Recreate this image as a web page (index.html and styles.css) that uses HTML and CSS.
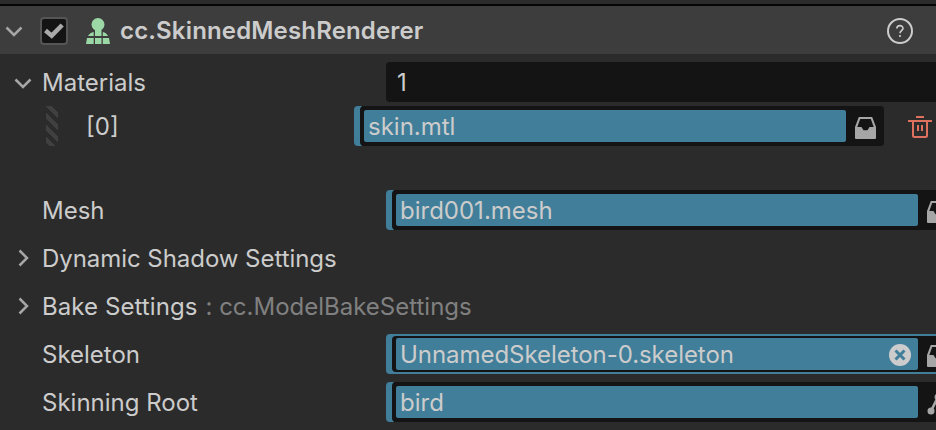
FILE: index.html
```html
<!DOCTYPE html>
<html lang="en">
<head>
<meta charset="utf-8">
<title>cc.SkinnedMeshRenderer</title>
<link rel="stylesheet" href="styles.css">
</head>
<body>
<svg class="defs" width="0" height="0">
  <symbol id="down" viewBox="0 0 18 12"><path d="M1.500 1.500 9 9l7.500-7.500" fill="none" stroke="#a6a6a6" stroke-width="2.500"/></symbol>
  <symbol id="right" viewBox="0 0 12 18"><path d="M1.500 1.500 9 9l-7.500 7.500" fill="none" stroke="#a6a6a6" stroke-width="2.500"/></symbol>
  <symbol id="tray" viewBox="0 0 22 22"><path fill="#a6a6a6" fill-rule="evenodd" d="M3.800 0h13.400L21 10v11q0 1-1 1H1q-1 0-1-1V10zM5.200 2 2.300 10H6.500l2 3.200h4l2-3.200h4.200L15.800 2z"/></symbol>
</svg>
<main class="panel">
  <header class="header">
    <svg class="chevron-down" width="18" height="12"><use href="#down"/></svg>
    <span class="checkbox"><svg width="20" height="16" viewBox="0 0 20 16"><path d="M1.500 7.500 7.700 12.700 18.200 2" fill="none" stroke="#a9a9a9" stroke-width="4.500"/></svg></span>
    <svg class="component" width="24" height="26" viewBox="0 0 24 26">
      <g fill="#9bd8a5"><circle cx="12" cy="6.500" r="6.500"/><path d="M9 12h6.500v6H9zM7.700 14V18H2q2-3.500 5.700-4zM16.800 14V18H22q-1.800-3.500-5.200-4zM1 20H7.700v6H0zM9 20h6.500v6H9zM16.800 20H23l1 6h-7.200z"/></g>
    </svg>
    <h1 class="title">cc.SkinnedMeshRenderer</h1>
    <svg class="help" width="26" height="26" viewBox="0 0 26 26"><circle cx="13" cy="13" r="12" fill="none" stroke="#ccc" stroke-width="2"/><path d="M9.800 10.600C9.900 6.700 16 6.700 16 10.300c0 2.200-3 2.600-3 5" fill="none" stroke="#ccc" stroke-width="1.600"/><circle cx="13" cy="18" r="1.100" fill="#ccc"/></svg>
  </header>
  <section class="props">
    <div class="row">
      <span class="toggle"><svg class="chevron-down" width="18" height="12"><use href="#down"/></svg></span>
      <span class="label">Materials</span>
      <span class="number">1</span>
    </div>
    <div class="row item">
      <span class="grip"></span>
      <span class="label index">[0]</span>
      <span class="asset asset-item"><span class="value">skin.mtl</span><svg class="pick" width="22" height="22"><use href="#tray"/></svg></span>
      <svg class="trash" width="24" height="22" viewBox="0 0 24 22"><path d="M8 1h8M0 5h24M5 5v14.500q0 1.500 1.500 1.500h11q1.500 0 1.500-1.500V5M10 9v6M14 9v6" fill="none" stroke="#e0715f" stroke-width="2"/></svg>
    </div>
    <div class="row mesh">
      <span class="toggle"></span>
      <span class="label">Mesh</span>
      <span class="asset"><span class="value">bird001.mesh</span><svg class="pick" width="22" height="22"><use href="#tray"/></svg></span>
    </div>
    <div class="row">
      <span class="toggle"><svg class="chevron-right" width="12" height="18"><use href="#right"/></svg></span>
      <span class="label tight">Dynamic Shadow Settings</span>
    </div>
    <div class="row">
      <span class="toggle"><svg class="chevron-right" width="12" height="18"><use href="#right"/></svg></span>
      <span class="label bake"><span class="name">Bake Settings</span><span class="type">: cc.ModelBakeSettings</span></span>
    </div>
    <div class="row">
      <span class="toggle"></span>
      <span class="label">Skeleton</span>
      <span class="asset hovered"><span class="value tight">UnnamedSkeleton-0.skeleton<svg class="clear" width="22" height="22" viewBox="0 0 22 22"><circle cx="11" cy="11" r="11" fill="#ccc"/><path d="m6.500 6.500 9 9m0-9-9 9" stroke="#417e99" stroke-width="3"/></svg></span><svg class="pick" width="22" height="22"><use href="#tray"/></svg></span>
    </div>
    <div class="row">
      <span class="toggle"></span>
      <span class="label">Skinning Root</span>
      <span class="asset"><span class="value">bird</span><svg class="pick" width="22" height="22" viewBox="0 0 22 22"><path d="m4 18 7-14 7 14" fill="none" stroke="#a6a6a6" stroke-width="2.600"/><g fill="#a6a6a6"><circle cx="4" cy="18" r="3.500"/><circle cx="11" cy="4" r="3.500"/><circle cx="18" cy="18" r="3.500"/></g></svg></span>
    </div>
  </section>
</main>
</body>
</html>
```
FILE: styles.css
```css
* { box-sizing: border-box; }
body {
  margin: 0;
  height: 430px;
  overflow: hidden;
  background: #2b2b2b;
  color: #ccc;
  font-family: Inter, "Liberation Sans", sans-serif;
  font-size: 24px;
  line-height: 32px;
}
.defs { display: block; }
svg { display: block; flex: none; overflow: visible; }
.panel {
  height: 426px;
  margin-top: 4px;
  border-top: 2px solid #050505;
  overflow: hidden;
}
.header {
  display: flex;
  align-items: center;
  height: 48px;
  padding: 0 23px 0 5px;
  background: #3d3d3d;
}
.chevron-down { margin-top: 3px; }
.chevron-right { margin-left: 2px; }
.checkbox {
  display: flex;
  align-items: center;
  justify-content: center;
  width: 28px;
  height: 28px;
  margin: 2px 18px 0 17px;
  border: 2px solid #555;
  border-radius: 4px;
  background: #141414;
}
.title {
  margin: 0 auto 0 10px;
  padding-top: 2px;
  font-size: 24px;
  font-weight: 600;
  letter-spacing: 0.16px;
}
.component, .help { margin-top: 2px; }
.props { padding-top: 4px; }
.row {
  display: flex;
  align-items: center;
  height: 48px;
  white-space: nowrap;
}
.row.item { height: 40px; }
.row.mesh { margin-top: 40px; }
.toggle {
  display: flex;
  justify-content: center;
  flex: none;
  width: 20px;
  margin: 0 9px 0 13px;
}
.label { flex: none; width: 344px; padding-top: 2px; }
.tight { letter-spacing: -0.05px; }
.bake { display: flex; gap: 8px; }
.name { letter-spacing: 0.08px; }
.type { color: #808080; }
.number {
  flex: 1;
  height: 40px;
  padding: 5px 11px 3px;
  border-radius: 4px 0 0 4px;
  background: #141414;
}
.grip {
  width: 12px;
  height: 40px;
  margin: 0 28px 0 46px;
  background: linear-gradient(45deg, #404040 25%, #2b2b2b 25% 50%, #404040 50% 75%, #2b2b2b 75%) 0 0 / 12px 12px;
}
.index { width: 268px; }
.asset {
  position: relative;
  display: flex;
  align-items: center;
  flex: none;
  width: 582px;
  height: 40px;
  padding-left: 10px;
  border-radius: 4px;
  background: linear-gradient(#141414, #141414) 8px 0 no-repeat, #417e99;
}
.asset::before {
  content: "";
  position: absolute;
  inset: 0 0 0 6px;
  border-radius: 4px;
  background: #141414;
}
.asset-item { width: 530px; }
.value {
  position: relative;
  display: flex;
  align-items: center;
  justify-content: space-between;
  width: 522px;
  height: 32px;
  padding: 1px 7px 0 4px;
  border-radius: 2px;
  background: #417e99;
}
.asset-item .value { width: 482px; }
.hovered { background: #417e99; }
.hovered::before { inset: 2px 2px 2px 6px; }
.pick { position: relative; margin: 4px 0 0 9px; }
.trash { margin: 2px 0 0 24px; }
```
